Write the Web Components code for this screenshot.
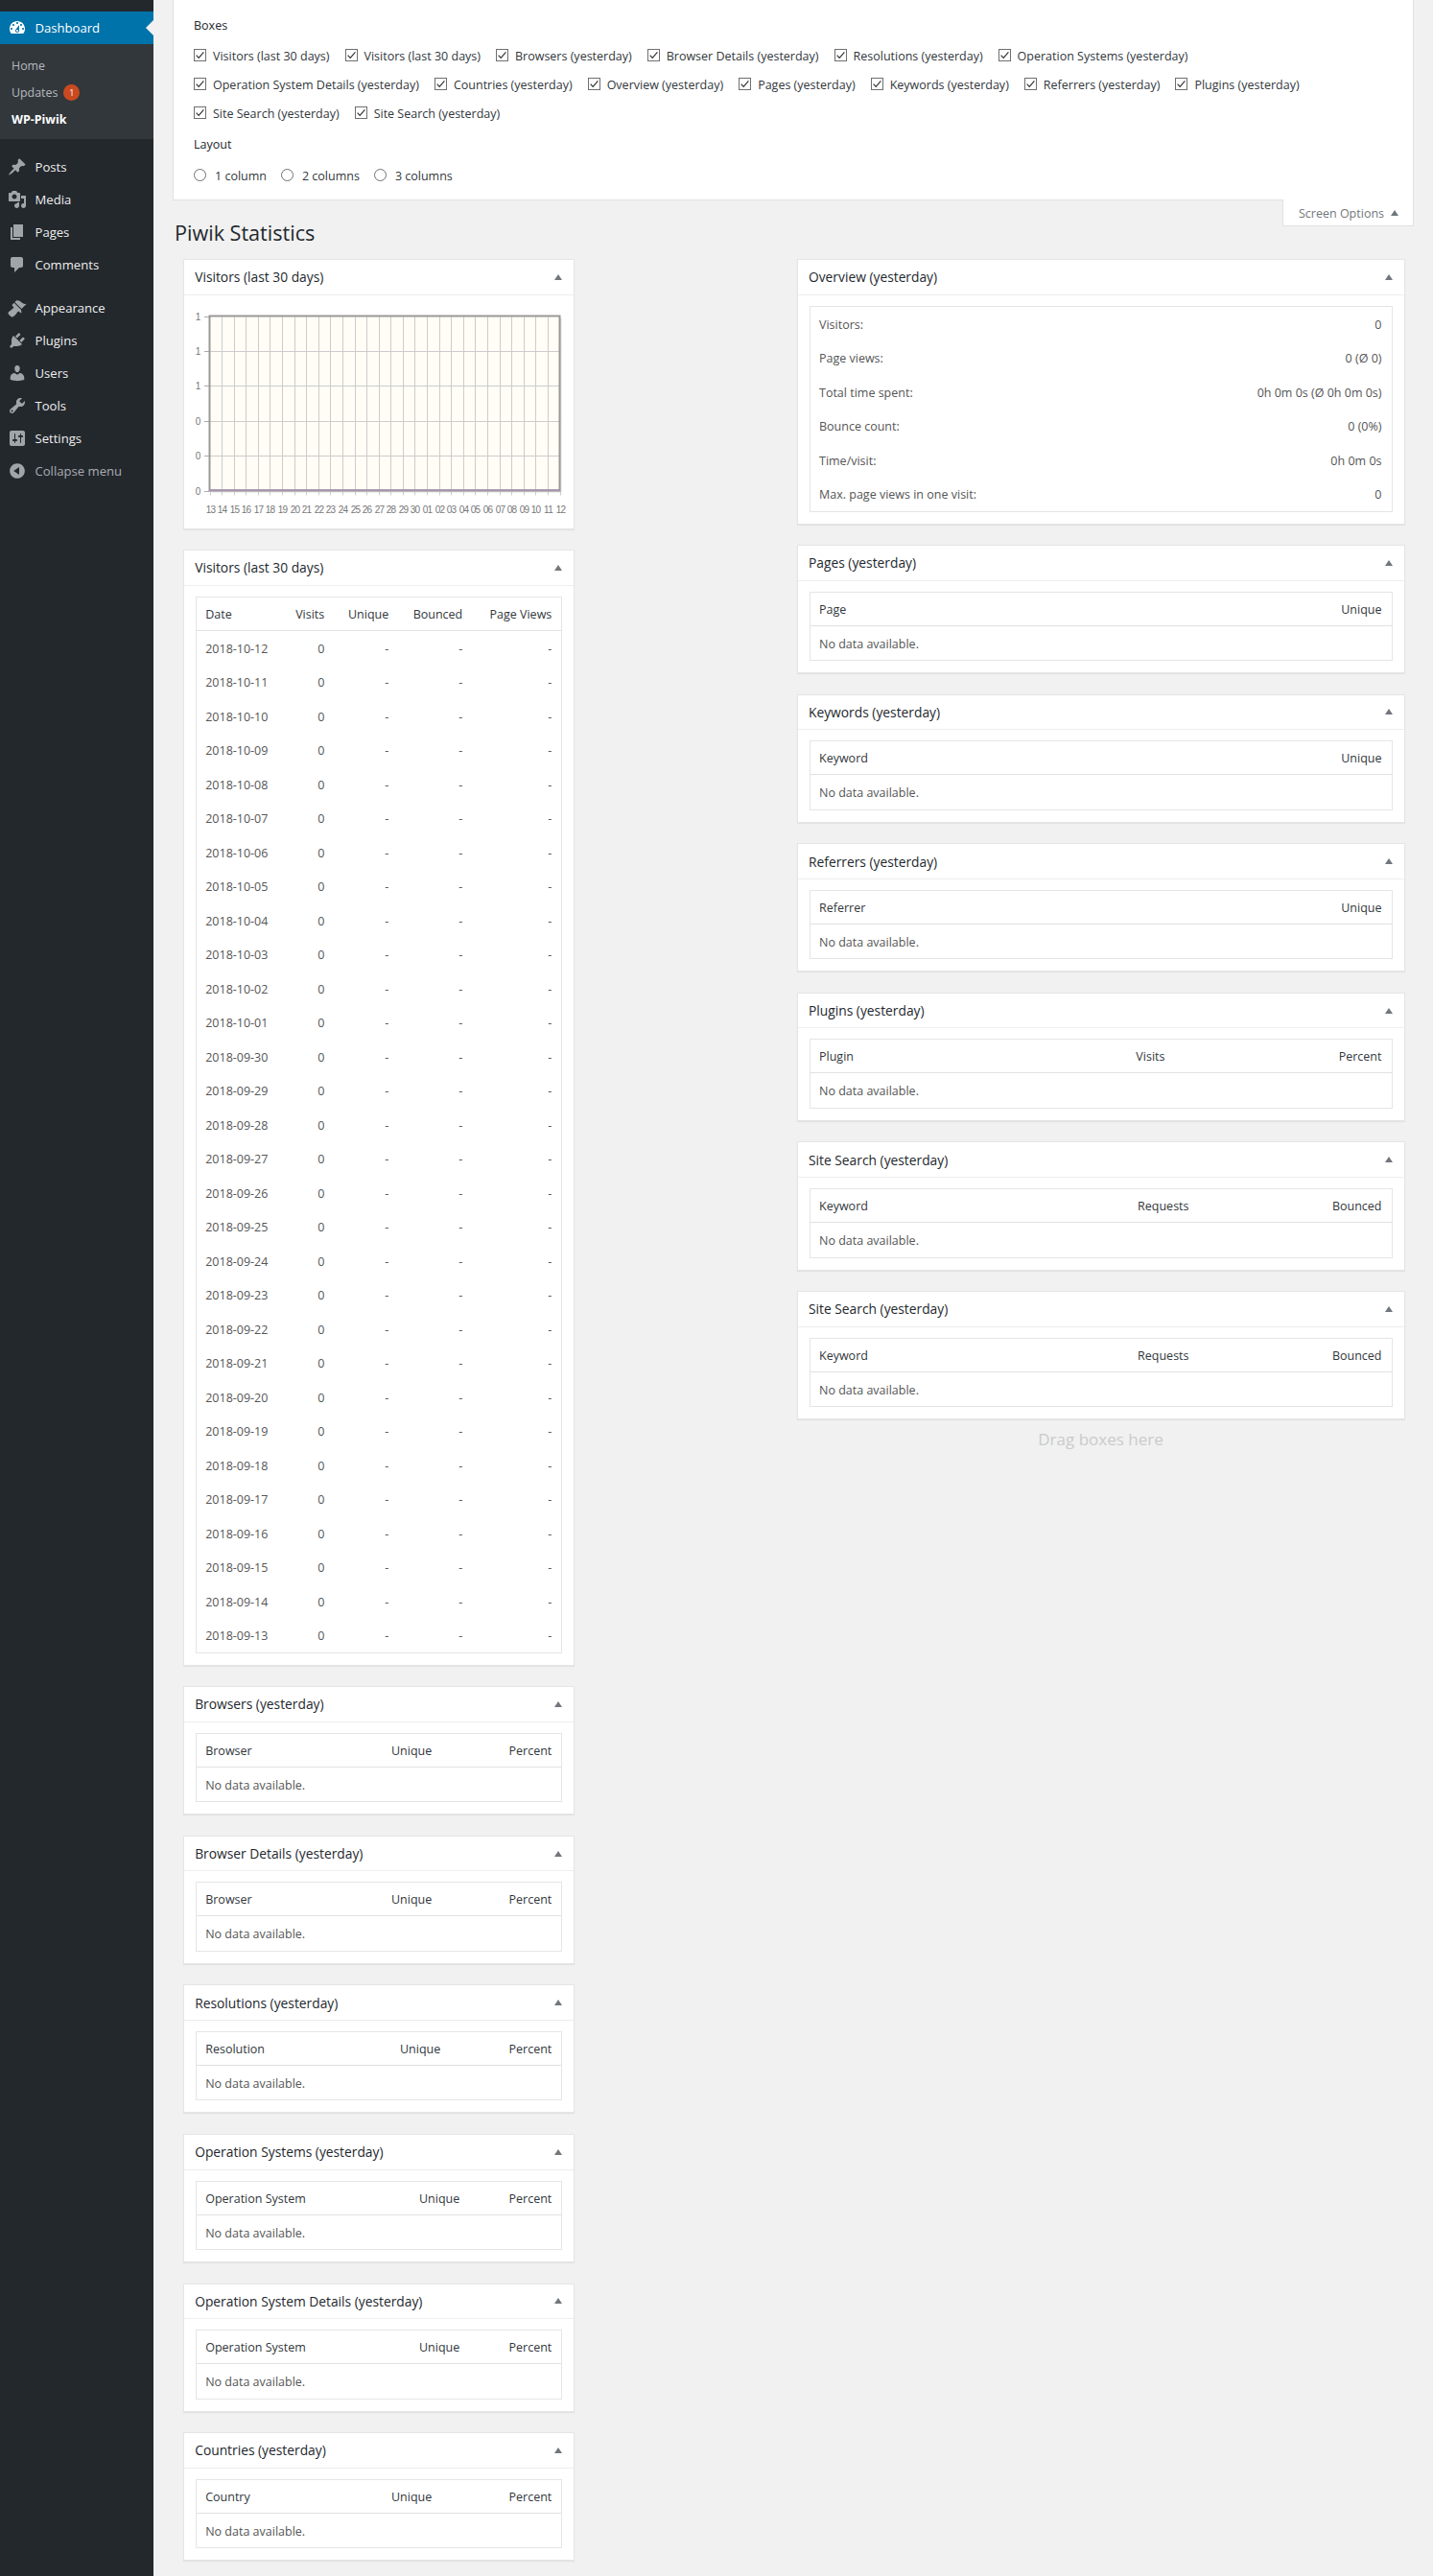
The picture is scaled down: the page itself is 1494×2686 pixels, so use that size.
<!DOCTYPE html>
<html lang="en">
<head>
<meta charset="utf-8">
<title>Piwik Statistics</title>
<style>
    html, body { margin: 0; padding: 0; }
    body {
        background: #f1f1f1;
        color: #444;
        font-family: "Open Sans", "Noto Sans", sans-serif;
        font-size: 12.5px;
    }
</style>
</head>
<body>
<wp-app>
    <wp-sidebar slot="side"></wp-sidebar>
    <screen-panel></screen-panel>
    <page-title>Piwik Statistics</page-title>
    <box-columns>
        <post-box slot="left" title="Visitors (last 30 days)"><visits-chart></visits-chart></post-box>
        <post-box slot="left" title="Visitors (last 30 days)"><stat-table id="visits" columns="Date|Visits|Unique|Bounced|Page Views" widths=",52,67,77,93"></stat-table></post-box>
        <post-box slot="left" title="Browsers (yesterday)"><stat-table columns="Browser|Unique|Percent" widths=",80,125"></stat-table></post-box>
        <post-box slot="left" title="Browser Details (yesterday)"><stat-table columns="Browser|Unique|Percent" widths=",80,125"></stat-table></post-box>
        <post-box slot="left" title="Resolutions (yesterday)"><stat-table columns="Resolution|Unique|Percent" widths=",80,116"></stat-table></post-box>
        <post-box slot="left" title="Operation Systems (yesterday)"><stat-table columns="Operation System|Unique|Percent" widths=",80,96"></stat-table></post-box>
        <post-box slot="left" title="Operation System Details (yesterday)"><stat-table columns="Operation System|Unique|Percent" widths=",80,96"></stat-table></post-box>
        <post-box slot="left" title="Countries (yesterday)"><stat-table columns="Country|Unique|Percent" widths=",80,125"></stat-table></post-box>

        <post-box slot="right" title="Overview (yesterday)"><stat-table id="overview" widths=",300"></stat-table></post-box>
        <post-box slot="right" title="Pages (yesterday)"><stat-table columns="Page|Unique" widths=",200"></stat-table></post-box>
        <post-box slot="right" title="Keywords (yesterday)"><stat-table columns="Keyword|Unique" widths=",200"></stat-table></post-box>
        <post-box slot="right" title="Referrers (yesterday)"><stat-table columns="Referrer|Unique" widths=",200"></stat-table></post-box>
        <post-box slot="right" title="Plugins (yesterday)"><stat-table columns="Plugin|Visits|Percent" widths=",100,226"></stat-table></post-box>
        <post-box slot="right" title="Site Search (yesterday)"><stat-table columns="Keyword|Requests|Bounced" widths=",100,201"></stat-table></post-box>
        <post-box slot="right" title="Site Search (yesterday)"><stat-table columns="Keyword|Requests|Bounced" widths=",100,201"></stat-table></post-box>
        <drag-hint slot="right">Drag boxes here</drag-hint>
    </box-columns>
</wp-app>

<script>
const ICONS = {
    dashboard: "M3.76 16h12.48c1.1-1.37 1.76-3.11 1.76-5 0-4.42-3.58-8-8-8s-8 3.58-8 8c0 1.89.66 3.63 1.76 5zM10 4c.55 0 1 .45 1 1s-.45 1-1 1-1-.45-1-1 .45-1 1-1zM6 6c.55 0 1 .45 1 1s-.45 1-1 1-1-.45-1-1 .45-1 1-1zm8 0c.55 0 1 .45 1 1s-.45 1-1 1-1-.45-1-1 .45-1 1-1zm-5.37 5.55L12 7v6c0 1.1-.9 2-2 2s-2-.9-2-2c0-.57.24-1.08.63-1.45zM4 10c.55 0 1 .45 1 1s-.45 1-1 1-1-.45-1-1 .45-1 1-1zm12 0c.55 0 1 .45 1 1s-.45 1-1 1-1-.45-1-1 .45-1 1-1zm-5 3c0-.55-.45-1-1-1s-1 .45-1 1 .45 1 1 1 1-.45 1-1z",
    posts: "M10.44 3.02l1.82-1.82 6.36 6.35-1.83 1.82c-1.05-.68-2.48-.57-3.41.36l-.75.75c-.92.93-1.04 2.35-.35 3.41l-1.83 1.82-2.41-2.41-2.8 2.79c-.42.42-3.38 2.71-3.8 2.29s1.86-3.39 2.28-3.81l2.79-2.79L4.1 9.36l1.83-1.82c1.05.69 2.48.57 3.4-.36l.75-.75c.93-.92 1.05-2.35.36-3.41z",
    media: "M13 11V4c0-.55-.45-1-1-1h-1.67L9 1H5L3.67 3H2c-.55 0-1 .45-1 1v7c0 .55.45 1 1 1h10c.55 0 1-.45 1-1zM7 4.5c1.38 0 2.5 1.12 2.5 2.5S8.38 9.5 7 9.5 4.5 8.38 4.5 7 5.62 4.5 7 4.5zM14 6h5v10.5c0 1.38-1.12 2.5-2.5 2.5S14 17.88 14 16.5s1.12-2.5 2.5-2.5c.17 0 .34.02.5.05V9h-3V6zm-4 8.05V13h2v3.5c0 1.38-1.12 2.5-2.5 2.5S7 17.88 7 16.5 8.12 14 9.5 14c.17 0 .34.02.5.05z",
    pages: "M6 15V2h10v13H6zm-1 1h8v2H3V5h2v11z",
    comments: "M5 2h9c1.1 0 2 .9 2 2v7c0 1.1-.9 2-2 2h-2l-5 5v-5H5c-1.1 0-2-.9-2-2V4c0-1.1.9-2 2-2z",
    appearance: "M14.48 11.06L7.41 3.99l1.5-1.5c.5-.56 2.3-.47 3.51.32 1.21.8 1.43 1.28 2.91 2.1 1.18.64 2.45 1.26 4.45.85zm-.71.71L6.7 4.7 4.93 6.47c-.39.39-.39 1.02 0 1.41l1.06 1.06c.39.39.39 1.03 0 1.42-.6.6-1.43 1.11-2.21 1.69-.35.26-.7.53-1.01.84C1.43 13.23.4 14.75.4 15.59c.03.97 3.03 3.96 3.96 4 .84 0 2.36-1.03 3.72-2.37.31-.31.58-.66.84-1.01.58-.78 1.09-1.61 1.69-2.21.39-.39 1.03-.39 1.42 0l1.06 1.06c.39.39 1.02.39 1.41 0z",
    plugins: "M13.11 4.36L9.87 7.6 8 5.73l3.24-3.24c.35-.34 1.05-.2 1.56.32.52.51.66 1.21.31 1.55zm-8 1.77l.91-1.12 9.01 9.01-1.19.84c-.71.71-2.63 1.16-3.82 1.16H6.14L4.9 17.26c-.59.59-1.54.59-2.12 0-.59-.58-.59-1.53 0-2.12l1.24-1.24v-3.88c0-1.13.4-3.19 1.09-3.89zm7.26 3.97l3.24-3.24c.34-.35 1.04-.21 1.55.31.52.51.66 1.21.31 1.55l-3.24 3.25z",
    users: "M10 9.25c-2.27 0-2.73-3.44-2.73-3.44C7 4.02 7.82 2 9.97 2c2.16 0 2.98 2.02 2.71 3.81 0 0-.41 3.44-2.68 3.44zm0 2.57L12.72 10c2.39 0 4.52 2.33 4.52 4.53v2.49s-3.65 1.13-7.24 1.13c-3.65 0-7.24-1.13-7.24-1.13v-2.49c0-2.25 1.94-4.48 4.47-4.48z",
    tools: "M16.68 9.77c-1.34 1.34-3.3 1.67-4.95.99l-5.41 6.52c-.99.99-2.59.99-3.58 0s-.99-2.59 0-3.57l6.52-5.42c-.68-1.65-.35-3.61.99-4.95 1.28-1.28 3.12-1.62 4.72-1.06l-2.89 2.89 2.82 2.82 2.86-2.87c.53 1.58.18 3.39-1.08 4.65zM3.81 16.21c.4.39 1.04.39 1.43 0 .4-.4.4-1.04 0-1.43-.39-.4-1.03-.4-1.43 0-.39.39-.39 1.03 0 1.43z",
    settings: "M18 16V4c0-1.1-.9-2-2-2H4c-1.1 0-2 .9-2 2v12c0 1.1.9 2 2 2h12c1.1 0 2-.9 2-2zM8 11h1c.55 0 1 .45 1 1s-.45 1-1 1H8v1.5c0 .28-.22.5-.5.5s-.5-.22-.5-.5V13H6c-.55 0-1-.45-1-1s.45-1 1-1h1V5.5c0-.28.22-.5.5-.5s.5.22.5.5V11zm5-2h-1c-.55 0-1-.45-1-1s.45-1 1-1h1V5.5c0-.28.22-.5.5-.5s.5.22.5.5V7h1c.55 0 1 .45 1 1s-.45 1-1 1h-1v5.5c0 .28-.22.5-.5.5s-.5-.22-.5-.5V9z",
    collapse: "M10 2.16c4.33 0 7.84 3.51 7.84 7.84s-3.51 7.84-7.84 7.84S2.16 14.33 2.16 10 5.71 2.16 10 2.16zm2 11.72V6.12L6.18 9.97z"
};

class WpApp extends HTMLElement {
    constructor() {
        super();
        this.attachShadow({mode: "open"});
    }

    connectedCallback() {
        this.shadowRoot.innerHTML = `
        <style>
            :host { display: flex; min-height: 2686px; }
            main { flex: 1; min-width: 0; padding: 0 20px; position: relative; }
        </style>
        <slot name="side"></slot>
        <main><slot></slot></main>`;
    }
}

class WpSidebar extends HTMLElement {
    constructor() {
        super();
        this.attachShadow({mode: "open"});
    }

    item(icon, label, extra = "") {
        return `<a class="item ${extra}"><svg viewBox="0 0 20 20"><path d="${ICONS[icon]}"/></svg><span>${label}</span></a>`;
    }

    connectedCallback() {
        this.shadowRoot.innerHTML = `
        <style>
            :host { display: block; width: 160px; flex: none; background: #23282d; padding-top: 12px; box-sizing: border-box; font-size: 13.1px; }
            .item { display: flex; align-items: center; height: 34px; color: #eee; position: relative; }
            .item svg { width: 20px; height: 20px; margin-left: 8px; margin-right: 8.5px; fill: #a0a5aa; flex: none; }
            .current { background: #0073aa; color: #fff; }
            .current svg { fill: #fff; }
            .current::after { content: ""; position: absolute; right: 0; top: 9px; border: 8px solid transparent; border-left-width: 0; border-right-color: #f1f1f1; }
            .sub { background: #32373c; padding: 8px 0 7px 12px; font-size: 12.4px; color: #b4b9be; margin-bottom: 12px; }
            .sub div { height: 28px; display: flex; align-items: center; }
            .sub .on { color: #fff; font-weight: 700; }
            .badge { display: inline-flex; align-items: center; justify-content: center; width: 17px; height: 17px; border-radius: 50%; background: #ca4a1f; color: #fff; font-size: 9px; margin-left: 6px; }
            .sep { height: 11px; }
            .collapse { color: #a9adb1; }
        </style>
        ${this.item("dashboard", "Dashboard", "current")}
        <div class="sub">
            <div>Home</div>
            <div>Updates<span class="badge">1</span></div>
            <div class="on">WP-Piwik</div>
        </div>
        ${this.item("posts", "Posts")}
        ${this.item("media", "Media")}
        ${this.item("pages", "Pages")}
        ${this.item("comments", "Comments")}
        <div class="sep"></div>
        ${this.item("appearance", "Appearance")}
        ${this.item("plugins", "Plugins")}
        ${this.item("users", "Users")}
        ${this.item("tools", "Tools")}
        ${this.item("settings", "Settings")}
        ${this.item("collapse", "Collapse menu", "collapse")}`;
    }
}

class ScreenPanel extends HTMLElement {
    constructor() {
        super();
        this.attachShadow({mode: "open"});
    }

    check(label) {
        return `<label><svg width="13" height="13" viewBox="0 0 13 13"><rect x=".5" y=".5" width="12" height="12" fill="#fff" stroke="#6f6f6f"/><path d="M2.6 6.6l2.6 2.7 5.2-6" fill="none" stroke="#333" stroke-width="1.2"/></svg><span>${label}</span></label>`;
    }

    radio(label) {
        return `<label class="radio"><svg width="13" height="13" viewBox="0 0 13 13"><circle cx="6.5" cy="6.5" r="6" fill="#fff" stroke="#6f6f6f"/></svg><span>${label}</span></label>`;
    }

    connectedCallback() {
        const rows = [
            ["Visitors (last 30 days)", "Visitors (last 30 days)", "Browsers (yesterday)", "Browser Details (yesterday)", "Resolutions (yesterday)", "Operation Systems (yesterday)"],
            ["Operation System Details (yesterday)", "Countries (yesterday)", "Overview (yesterday)", "Pages (yesterday)", "Keywords (yesterday)", "Referrers (yesterday)", "Plugins (yesterday)"],
            ["Site Search (yesterday)", "Site Search (yesterday)"]
        ];
        this.shadowRoot.innerHTML = `
        <style>
            :host { display: block; position: relative; height: 209px; box-sizing: border-box; background: #fff; border: 1px solid #e1e1e1; border-top: 0; padding: 17px 21px 0; color: #32373c; }
            h5 { margin: 0; font-size: inherit; font-weight: 500; line-height: 20px; color: #23282d; }
            .row { display: flex; height: 30px; align-items: center; gap: 16px; }
            .boxes { margin-top: 6px; }
            .layout { margin-top: 8px; }
            .radios { display: flex; gap: 15px; margin-top: 12px; height: 20px; align-items: center; }
            label { display: inline-flex; align-items: center; gap: 7px; white-space: nowrap; }
            label svg { position: relative; top: -1px; flex: none; }
            label.radio { gap: 9px; }
            .tab { position: absolute; right: -1px; top: 100%; width: 137px; height: 28px; box-sizing: border-box; background: #fff; border: 1px solid #e1e1e1; border-top: 0; display: flex; align-items: center; padding: 2px 0 0 16px; gap: 7px; color: #72777c; }
            .tab i { width: 0; height: 0; border: 4.5px solid transparent; border-top: 0; border-bottom: 6px solid #72777c; margin-top: -2px; }
        </style>
        <h5>Boxes</h5>
        <div class="boxes">${rows.map(r => `<div class="row">${r.map(l => this.check(l)).join("")}</div>`).join("")}</div>
        <h5 class="layout">Layout</h5>
        <div class="radios">${["1 column", "2 columns", "3 columns"].map(l => this.radio(l)).join("")}</div>
        <div class="tab">Screen Options<i></i></div>`;
    }
}

class PageTitle extends HTMLElement {
    constructor() {
        super();
        this.attachShadow({mode: "open"});
    }

    connectedCallback() {
        this.shadowRoot.innerHTML = `
        <style>
            :host { display: block; margin-left: 2px; padding: 19px 0 12px; font-size: 21.6px; line-height: 30px; color: #23282d; }
        </style>
        <slot></slot>`;
    }
}

class BoxColumns extends HTMLElement {
    constructor() {
        super();
        this.attachShadow({mode: "open"});
    }

    connectedCallback() {
        this.shadowRoot.innerHTML = `
        <style>
            :host { display: flex; justify-content: space-between; margin: 0 9.5px 0 10.7px; }
            .col { display: flex; flex-direction: column; gap: 21.5px; }
            .left { width: 408.6px; }
            .right { width: 634px; }
        </style>
        <div class="col left"><slot name="left"></slot></div>
        <div class="col right"><slot name="right"></slot></div>`;
    }
}

class PostBox extends HTMLElement {
    constructor() {
        super();
        this.attachShadow({mode: "open"});
    }

    connectedCallback() {
        this.shadowRoot.innerHTML = `
        <style>
            :host { display: block; background: #fff; border: 1px solid #e5e5e5; box-shadow: 0 1px 1px rgba(0, 0, 0, .06); }
            header { display: flex; align-items: center; justify-content: space-between; height: 35.6px; padding: 0 12px 0 11.5px; border-bottom: 1px solid #eee; font-size: 13.8px; color: #23282d; }
            header i { width: 0; height: 0; border: 4px solid transparent; border-top: 0; border-bottom: 6px solid #72777c; }
            .inside { padding: 11px 12px 12px; }
        </style>
        <header><span>${this.getAttribute("title")}</span><i></i></header>
        <div class="inside"><slot></slot></div>`;
    }
}

class StatTable extends HTMLElement {
    constructor() {
        super();
        this.attachShadow({mode: "open"});
    }

    connectedCallback() {
        this.render();
    }

    set rows(rows) {
        this._rows = rows;
        this.render();
    }

    render() {
        const columns = this.getAttribute("columns") ? this.getAttribute("columns").split("|") : [];
        const widths = (this.getAttribute("widths") || "").split(",");
        const cols = widths.map(w => w ? `<col style="width:${w}px">` : "<col>").join("");
        const head = columns.length ? `<thead><tr>${columns.map(c => `<th>${c}</th>`).join("")}</tr></thead>` : "";
        const body = this._rows
            ? this._rows.map(r => `<tr>${r.map(c => `<td>${c}</td>`).join("")}</tr>`).join("")
            : `<tr><td colspan="${widths.length}">No data available.</td></tr>`;
        this.shadowRoot.innerHTML = `
        <style>
            :host { display: block; }
            table { width: 100%; table-layout: fixed; border-collapse: separate; border-spacing: 0; border: 1px solid #e5e5e5; box-sizing: border-box; }
            th, td { padding: 9px 10px 7px; text-align: right; font-weight: 400; white-space: nowrap; }
            th:first-child, td:first-child { text-align: left; padding-left: 9.5px; }
            th { line-height: 18px; color: #32373c; border-bottom: 1px solid #e1e1e1; }
            td { line-height: 19.5px; color: #555; }
        </style>
        <table><colgroup>${cols}</colgroup>${head}<tbody>${body}</tbody></table>`;
    }
}

class VisitsChart extends HTMLElement {
    constructor() {
        super();
        this.attachShadow({mode: "open"});
    }

    connectedCallback() {
        const left = 14.5, right = 379.5, top = 10.5, bottom = 192.5;
        const stepX = (right - left) / 29, stepY = (bottom - top) / 5;
        const days = [];
        for (let d = 13; d <= 30; d++) days.push(String(d));
        for (let d = 1; d <= 12; d++) days.push(String(d).padStart(2, "0"));
        let grid = "", labels = "";
        days.forEach((day, i) => {
            const x = Math.round(left + i * stepX) + .5;
            if (i > 0 && i < 29) grid += `<path d="M${x} ${top}V${bottom}" stroke="#ccc"/>`;
            grid += `<path d="M${x} ${bottom}v5" stroke="#ccc"/>`;
            labels += `<text x="${x}" y="215.5" text-anchor="middle">${day}</text>`;
        });
        ["1", "1", "1", "0", "0", "0"].forEach((v, i) => {
            const y = Math.round(top + i * stepY) + .5;
            if (i > 0 && i < 5) grid += `<path d="M${left} ${y}H${right}" stroke="#ccc"/>`;
            grid += `<path d="M9 ${y}H${left}" stroke="#aaa"/>`;
            labels += `<text x="2" y="${y + 3.5}" text-anchor="middle">${v}</text>`;
        });
        this.shadowRoot.innerHTML = `
        <style>
            :host { display: block; height: 220px; }
            svg { display: block; overflow: visible; }
            text { font: 10px "Liberation Sans", sans-serif; letter-spacing: -.8px; fill: #777; }
        </style>
        <svg width="384" height="220" viewBox="0 0 384 220">
            <rect x="${left + 2}" y="${top + 2}" width="${right - left}" height="${bottom - top}" fill="#ddd"/>
            <rect x="${left}" y="${top}" width="${right - left}" height="${bottom - top}" fill="#fffdf6"/>
            ${grid}
            <rect x="${left}" y="${top}" width="${right - left}" height="${bottom - top}" fill="none" stroke="#999" stroke-width="2"/>
            <path d="M${left} ${bottom - .5}H${right}" stroke="#a890b0" stroke-width="1.5"/>
            ${labels}
        </svg>`;
    }
}

class DragHint extends HTMLElement {
    constructor() {
        super();
        this.attachShadow({mode: "open"});
    }

    connectedCallback() {
        this.shadowRoot.innerHTML = `
        <style>
            :host { display: block; margin-top: -21.5px; text-align: center; font-size: 17px; line-height: 42px; color: #cbcbcb; }
        </style>
        <slot></slot>`;
    }
}

customElements.define("wp-app", WpApp);
customElements.define("wp-sidebar", WpSidebar);
customElements.define("screen-panel", ScreenPanel);
customElements.define("page-title", PageTitle);
customElements.define("box-columns", BoxColumns);
customElements.define("post-box", PostBox);
customElements.define("stat-table", StatTable);
customElements.define("visits-chart", VisitsChart);
customElements.define("drag-hint", DragHint);

// 30 days back from 2018-10-12
const days = [];
for (let i = 0; i < 30; i++) {
    const day = new Date(Date.UTC(2018, 9, 12 - i)).toISOString().slice(0, 10);
    days.push([day, "0", "-", "-", "-"]);
}
document.querySelector("#visits").rows = days;

document.querySelector("#overview").rows = [
    ["Visitors:", "0"],
    ["Page views:", "0 (Ø 0)"],
    ["Total time spent:", "0h 0m 0s (Ø 0h 0m 0s)"],
    ["Bounce count:", "0 (0%)"],
    ["Time/visit:", "0h 0m 0s"],
    ["Max. page views in one visit:", "0"]
];
</script>
</body>
</html>
